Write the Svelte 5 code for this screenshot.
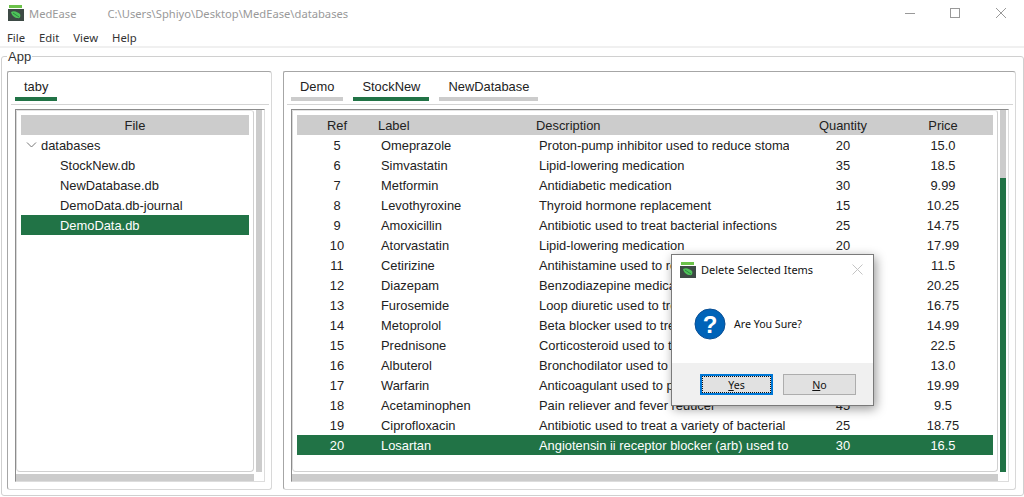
<script>
  const files = ["StockNew.db", "NewDatabase.db", "DemoData.db-journal", "DemoData.db"];
  const selectedFile = "DemoData.db";

  const tabs = ["Demo", "StockNew", "NewDatabase"];
  const activeTab = "StockNew";

  const items = [
    [5, "Omeprazole", "Proton-pump inhibitor used to reduce stomach acid", 20, "15.0"],
    [6, "Simvastatin", "Lipid-lowering medication", 35, "18.5"],
    [7, "Metformin", "Antidiabetic medication", 30, "9.99"],
    [8, "Levothyroxine", "Thyroid hormone replacement", 15, "10.25"],
    [9, "Amoxicillin", "Antibiotic used to treat bacterial infections", 25, "14.75"],
    [10, "Atorvastatin", "Lipid-lowering medication", 20, "17.99"],
    [11, "Cetirizine", "Antihistamine used to relieve allergy symptoms", 40, "11.5"],
    [12, "Diazepam", "Benzodiazepine medication", 15, "20.25"],
    [13, "Furosemide", "Loop diuretic used to treat fluid retention", 30, "16.75"],
    [14, "Metoprolol", "Beta blocker used to treat high blood pressure", 25, "14.99"],
    [15, "Prednisone", "Corticosteroid used to treat inflammation", 20, "22.5"],
    [16, "Albuterol", "Bronchodilator used to treat asthma", 35, "13.0"],
    [17, "Warfarin", "Anticoagulant used to prevent blood clots", 20, "19.99"],
    [18, "Acetaminophen", "Pain reliever and fever reducer", 45, "9.5"],
    [19, "Ciprofloxacin", "Antibiotic used to treat a variety of bacterial infections", 25, "18.75"],
    [20, "Losartan", "Angiotensin ii receptor blocker (arb) used to treat hypertension", 30, "16.5"],
  ];
  const selectedRef = 20;
</script>

{#snippet appIcon()}
  <svg class="app-icon" viewBox="0 0 16 16" width="16" height="16">
    <rect x="1" y="0" width="13" height="3" fill="#6cc24a" />
    <rect x="0" y="4" width="16" height="12" fill="#3d4a45" />
    <path d="M3 7 C6 5 10 7 12 9 C13 11 12 14 10 13 C7 13 4 11 3 7 Z" fill="#4fc25a" />
    <path d="M5 8 L11 12" stroke="#1f7a3a" stroke-width="0.8" />
  </svg>
{/snippet}

<div class="window">
  <div class="titlebar">
    {@render appIcon()}
    <span class="app-name">MedEase</span>
    <span class="path">C:\Users\Sphiyo\Desktop\MedEase\databases</span>
    <div class="controls">
      <svg width="10" height="12" viewBox="0 0 10 12"><path d="M0 6.5H10" stroke="#999" /></svg>
      <svg width="12" height="12" viewBox="0 0 12 12"><rect x="1.5" y="1.5" width="9" height="9" fill="none" stroke="#999" /></svg>
      <svg width="12" height="12" viewBox="0 0 12 12"><path d="M1 1L11 11M11 1L1 11" stroke="#999" /></svg>
    </div>
  </div>

  <nav class="menubar">
    <span>File</span>
    <span>Edit</span>
    <span>View</span>
    <span>Help</span>
  </nav>

  <div class="app-frame">
    <span class="frame-label">App</span>

    <section class="panel">
      <div class="tabs">
        <div class="tab active">taby</div>
      </div>
      <div class="tree-frame">
        <div class="tree-top">
          <div class="tree-box">
            <div class="col-head">File</div>
            <div class="tree-row root">
              <svg width="11" height="6" viewBox="0 0 11 6"><path d="M1 0.5L5.5 5L10 0.5" fill="none" stroke="#777" /></svg>
              databases
            </div>
            {#each files as f}
              <div class="tree-row" class:selected={f === selectedFile}>{f}</div>
            {/each}
          </div>
          <div class="vscroll"></div>
        </div>
        <div class="hscroll"></div>
      </div>
    </section>

    <section class="panel">
      <div class="tabs">
        {#each tabs as t}
          <div class="tab" class:active={t === activeTab}>{t}</div>
        {/each}
      </div>
      <div class="tree-frame">
        <div class="tree-top">
          <div class="tree-box">
            <div class="table-row head">
              <span class="center">Ref</span>
              <span>Label</span>
              <span>Description</span>
              <span class="center">Quantity</span>
              <span class="center">Price</span>
            </div>
            {#each items as it}
              <div class="table-row" class:selected={it[0] === selectedRef}>
                <span class="center">{it[0]}</span>
                <span class="cell">{it[1]}</span>
                <span class="cell">{it[2]}</span>
                <span class="center">{it[3]}</span>
                <span class="center">{it[4]}</span>
              </div>
            {/each}
          </div>
          <div class="vscroll"><div class="thumb"></div></div>
        </div>
        <div class="hscroll"></div>
      </div>
    </section>
  </div>

  <div class="dialog">
    <div class="dialog-title">
      {@render appIcon()}
      <span>Delete Selected Items</span>
      <svg class="dialog-close" width="11" height="11" viewBox="0 0 11 11"><path d="M0.5 0.5L10.5 10.5M10.5 0.5L0.5 10.5" stroke="#c4c4c4" /></svg>
    </div>
    <div class="dialog-body">
      <svg width="32" height="32" viewBox="0 0 32 32">
        <circle cx="16" cy="16" r="15" fill="#0063b8" stroke="#0a4f94" />
        <text x="16" y="24.5" text-anchor="middle" class="qmark">?</text>
      </svg>
      <span>Are You Sure?</span>
    </div>
    <div class="dialog-foot">
      <button class="focused"><u>Y</u>es</button>
      <button><u>N</u>o</button>
    </div>
  </div>
</div>

<style>
  :global(body) {
    margin: 0;
    background: #fff;
  }

  .window {
    position: relative;
    width: 1024px;
    height: 497px;
    overflow: hidden;
    background: #fff;
    font-family: "Liberation Sans", Arial, sans-serif;
    font-size: 12.9px;
    color: #222;
  }

  .titlebar {
    display: flex;
    align-items: center;
    height: 26px;
    padding-left: 8px;
    font-family: "Noto Sans", sans-serif;
    font-size: 11.2px;
    color: #999;
  }

  .app-name {
    margin-left: 5px;
  }

  .path {
    margin-left: 31px;
  }

  .controls {
    display: flex;
    gap: 34px;
    margin-left: auto;
    margin-right: 17px;
  }

  .menubar {
    display: flex;
    gap: 14px;
    align-items: center;
    padding: 2px 0 0 7px;
    box-sizing: border-box;
    border-bottom: 2px solid #f0f0f0;
    height: 22px;
    font-family: "Noto Sans", sans-serif;
    font-size: 11.3px;
    color: #333;
  }

  .app-frame {
    position: relative;
    display: grid;
    grid-template-columns: 265px 733px;
    gap: 11px;
    box-sizing: border-box;
    width: 1023px;
    height: 440px;
    margin: 8px 0 0 1px;
    padding: 14px 6px 5px 5px;
    border: 1px solid #d0d0d0;
    border-radius: 3px;
  }

  .frame-label {
    position: absolute;
    left: 5px;
    top: -7px;
    padding: 0 1px;
    background: #fff;
    font-size: 13px;
    line-height: 14px;
    color: #333;
  }

  .panel {
    display: flex;
    flex-direction: column;
    min-height: 0;
    padding: 0 6px 7px 7px;
    border: 1px solid #d8d8d8;
    border-top-color: #a6a6a6;
    border-left-color: #a6a6a6;
    border-radius: 2px 3px 3px 3px;
  }

  .tabs {
    display: flex;
    gap: 10px;
    height: 33px;
    margin: 0 -4px 4px -4px;
    padding: 7px 4px 0 4px;
    box-sizing: border-box;
    border-bottom: 1px solid #d4d4d4;
    align-items: flex-start;
  }

  .tab {
    padding: 0 9px;
    border-bottom: 4px solid #ccc;
    font-size: 12.9px;
    line-height: 15px;
    height: 18px;
    color: #222;
  }

  .tab.active {
    border-bottom-color: #217346;
  }

  .tree-frame {
    flex: 1;
    display: flex;
    flex-direction: column;
    min-height: 0;
    border: 1px solid #ddd;
    border-top-color: #8c8c8c;
    border-left-color: #8c8c8c;
  }

  .tree-top {
    flex: 1;
    display: flex;
    gap: 2px;
    min-height: 0;
    padding-right: 2px;
  }

  .tree-box {
    flex: 1;
    box-sizing: border-box;
    padding: 4px;
    border: 1px solid #d0d0d0;
    border-top-color: #e4e4e4;
    border-left-color: #d8d8d8;
    border-radius: 0 3px 4px 4px;
    overflow: hidden;
  }

  .col-head {
    height: 20px;
    background: #ccc;
    line-height: 21px;
    text-align: center;
  }

  .tree-row {
    height: 20px;
    padding-left: 39px;
    line-height: 21px;
  }

  .tree-row.root {
    display: flex;
    align-items: center;
    gap: 4px;
    padding-left: 5px;
  }

  .selected {
    background: #217346;
    color: #fff;
  }

  .vscroll {
    display: flex;
    flex-direction: column;
    width: 6px;
    background: #ccc;
  }

  .thumb {
    flex: 1;
    margin-top: 68px;
    background: #217346;
  }

  .hscroll {
    height: 7px;
    margin: 2px 10px 0 0;
    background: #ccc;
  }

  .table-row {
    display: grid;
    grid-template-columns: 80px 158px 258px 100px 100px;
    height: 20px;
    line-height: 21px;
  }

  .table-row.head {
    background: #ccc;
  }

  .table-row > span {
    overflow: hidden;
    white-space: nowrap;
  }

  .table-row > span.cell {
    padding-left: 4px;
    margin-right: 4px;
  }

  .head > span:not(.center) {
    padding-left: 1px;
  }

  .center {
    text-align: center;
  }

  .dialog {
    position: absolute;
    left: 671px;
    top: 254px;
    display: flex;
    flex-direction: column;
    box-sizing: border-box;
    width: 203px;
    height: 152px;
    background: #fff;
    border: 1px solid #7a7a7a;
    box-shadow: 2px 3px 10px rgba(0, 0, 0, 0.4);
    font-family: "Noto Sans", sans-serif;
    font-size: 11px;
    color: #111;
  }

  .dialog-title {
    display: flex;
    align-items: center;
    gap: 5px;
    height: 29px;
    padding: 0 10px 0 8px;
  }

  .dialog-close {
    margin-left: auto;
  }

  .dialog-body {
    display: flex;
    align-items: center;
    gap: 8px;
    height: 79px;
    padding: 1px 0 0 22px;
    box-sizing: border-box;
    font-size: 10.6px;
  }

  .qmark {
    font-family: "Liberation Sans", sans-serif;
    font-size: 24px;
    font-weight: 700;
    fill: #fff;
  }

  .dialog-foot {
    flex: 1;
    display: flex;
    gap: 10px;
    align-items: flex-start;
    padding: 11px 0 0 28px;
    background: #f0f0f0;
  }

  button {
    width: 73px;
    height: 21px;
    padding: 0;
    background: #e1e1e1;
    border: 1px solid #adadad;
    font-family: "Noto Sans", sans-serif;
    font-size: 10.6px;
    color: #111;
  }

  button.focused {
    border: 2px solid #0078d7;
    outline: 1px dotted #111;
    outline-offset: -3px;
  }
</style>
